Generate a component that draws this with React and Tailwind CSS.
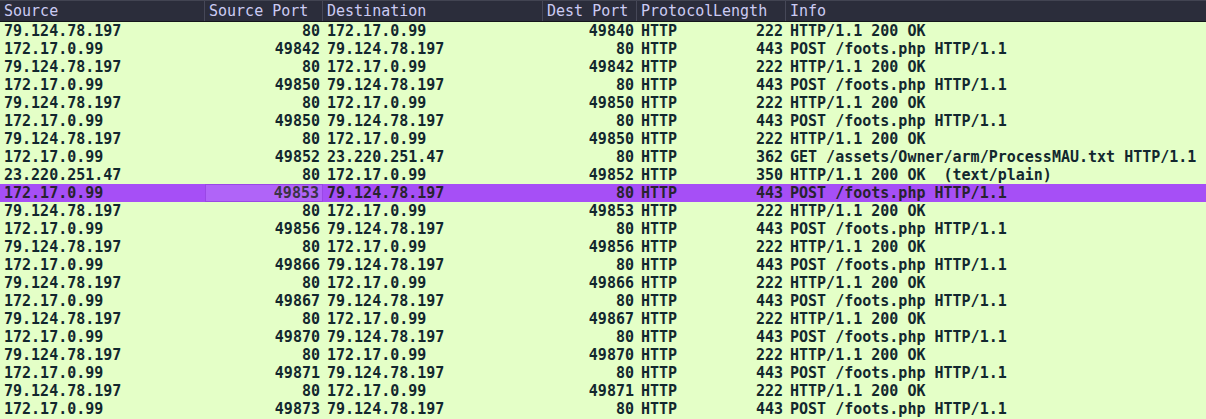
const ROWS = [
  ['79.124.78.197', '80', '172.17.0.99', '49840', 'HTTP', '222', 'HTTP/1.1 200 OK'],
  ['172.17.0.99', '49842', '79.124.78.197', '80', 'HTTP', '443', 'POST /foots.php HTTP/1.1'],
  ['79.124.78.197', '80', '172.17.0.99', '49842', 'HTTP', '222', 'HTTP/1.1 200 OK'],
  ['172.17.0.99', '49850', '79.124.78.197', '80', 'HTTP', '443', 'POST /foots.php HTTP/1.1'],
  ['79.124.78.197', '80', '172.17.0.99', '49850', 'HTTP', '222', 'HTTP/1.1 200 OK'],
  ['172.17.0.99', '49850', '79.124.78.197', '80', 'HTTP', '443', 'POST /foots.php HTTP/1.1'],
  ['79.124.78.197', '80', '172.17.0.99', '49850', 'HTTP', '222', 'HTTP/1.1 200 OK'],
  ['172.17.0.99', '49852', '23.220.251.47', '80', 'HTTP', '362', 'GET /assets/Owner/arm/ProcessMAU.txt HTTP/1.1'],
  ['23.220.251.47', '80', '172.17.0.99', '49852', 'HTTP', '350', 'HTTP/1.1 200 OK  (text/plain)'],
  ['172.17.0.99', '49853', '79.124.78.197', '80', 'HTTP', '443', 'POST /foots.php HTTP/1.1'],
  ['79.124.78.197', '80', '172.17.0.99', '49853', 'HTTP', '222', 'HTTP/1.1 200 OK'],
  ['172.17.0.99', '49856', '79.124.78.197', '80', 'HTTP', '443', 'POST /foots.php HTTP/1.1'],
  ['79.124.78.197', '80', '172.17.0.99', '49856', 'HTTP', '222', 'HTTP/1.1 200 OK'],
  ['172.17.0.99', '49866', '79.124.78.197', '80', 'HTTP', '443', 'POST /foots.php HTTP/1.1'],
  ['79.124.78.197', '80', '172.17.0.99', '49866', 'HTTP', '222', 'HTTP/1.1 200 OK'],
  ['172.17.0.99', '49867', '79.124.78.197', '80', 'HTTP', '443', 'POST /foots.php HTTP/1.1'],
  ['79.124.78.197', '80', '172.17.0.99', '49867', 'HTTP', '222', 'HTTP/1.1 200 OK'],
  ['172.17.0.99', '49870', '79.124.78.197', '80', 'HTTP', '443', 'POST /foots.php HTTP/1.1'],
  ['79.124.78.197', '80', '172.17.0.99', '49870', 'HTTP', '222', 'HTTP/1.1 200 OK'],
  ['172.17.0.99', '49871', '79.124.78.197', '80', 'HTTP', '443', 'POST /foots.php HTTP/1.1'],
  ['79.124.78.197', '80', '172.17.0.99', '49871', 'HTTP', '222', 'HTTP/1.1 200 OK'],
  ['172.17.0.99', '49873', '79.124.78.197', '80', 'HTTP', '443', 'POST /foots.php HTTP/1.1'],
];

const HEADERS = ['Source', 'Source Port', 'Destination', 'Dest Port', 'Protocol', 'Length', 'Info'];
// right-aligned numeric columns
const RIGHT = [false, true, false, true, false, true, false];
const SELECTED = 9;

const grid = 'grid grid-cols-[205px_118px_220px_94px_72px_77px_1fr]';

export default function App() {
  return (
    <div className="w-[1206px] h-[419px] overflow-hidden bg-[#e4ffc7] font-['DejaVu_Sans_Mono',monospace] text-[15px]">
      {/* column header */}
      <div className={`${grid} h-[22px] bg-[#2b2d3b] border-t border-[#424452] border-b border-b-[#14151b] text-[#cbcbf3] leading-[20px]`}>
        {HEADERS.map((h, i) => (
          <div
            key={h}
            className={`pl-1 whitespace-nowrap overflow-visible ${i < 6 && i !== 4 ? 'border-r border-[#464858]' : ''}`}
          >
            {h}
          </div>
        ))}
      </div>

      {/* packet rows */}
      {ROWS.map((r, ri) => {
        const sel = ri === SELECTED;
        return (
          <div
            key={ri}
            className={`${grid} h-[18px] leading-[18px] font-bold ${sel ? 'bg-[#a64ff6] text-[#28232f]' : 'text-[#12272e]'}`}
          >
            {r.map((c, ci) => (
              <div
                key={ci}
                className={`whitespace-pre overflow-visible ${RIGHT[ci] ? 'text-right pr-[3px]' : 'pl-1'} ${
                  sel && ci === 1 ? 'bg-[#b064f8] border border-[#9a47e6] leading-[16px] text-[#3b3346]' : ''
                }`}
              >
                {c}
              </div>
            ))}
          </div>
        );
      })}
    </div>
  );
}
